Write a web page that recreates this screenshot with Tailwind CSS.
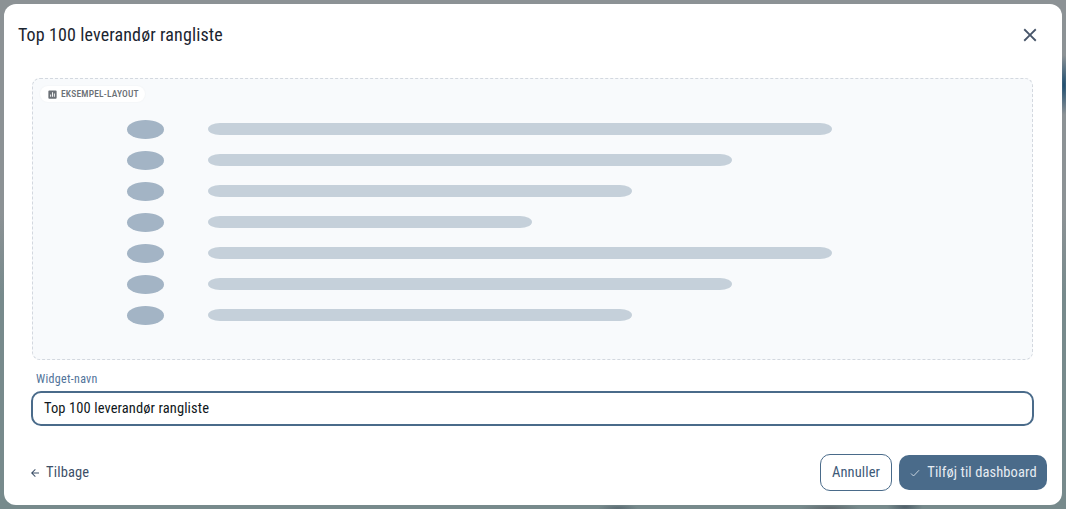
<!DOCTYPE html>
<html lang="da">
<head>
<meta charset="utf-8">
<title>Top 100 leverandør rangliste</title>
<script src="https://cdn.jsdelivr.net/npm/@tailwindcss/browser@4"></script>
</head>
<body class="w-[1066px] h-[509px] overflow-hidden bg-[#8a9194] font-['Roboto',sans-serif] [font-stretch:75%]">
<div class="w-full h-full px-1 pt-1 pb-1 bg-[radial-gradient(ellipse_6px_30px_at_1064px_85px,#1d4d70_0%,#1d4d7000_100%),radial-gradient(ellipse_18px_5px_at_905px_507px,#4f5e68_0%,#4f5e6800_100%),radial-gradient(ellipse_30px_4px_at_830px_508px,#5f686c_0%,#5f686c00_100%),radial-gradient(ellipse_20px_4px_at_618px_508px,#5b6b72_0%,#5b6b7200_100%),linear-gradient(180deg,#8c9295_0%,#8c9295_42%,#778a8c_58%,#778a8c_100%)]">
  <div class="w-[1058px] h-[501px] bg-white rounded-xl flex flex-col">
    <header class="h-[62px] flex items-center justify-between pl-[14px] pr-[20px]">
      <h1 class="text-[18px] leading-[28px] tracking-[0.12px] text-[#1b2530]">Top 100 leverandør rangliste</h1>
      <button class="w-6 h-6 flex items-center justify-center text-[#475569]">
        <svg class="w-[22px] h-[22px]" viewBox="0 0 24 24" fill="currentColor"><path d="M19 6.41 17.59 5 12 10.59 6.41 5 5 6.41 10.59 12 5 17.59 6.41 19 12 13.41 17.59 19 19 17.59 13.41 12z"/></svg>
      </button>
    </header>
    <section class="ml-7 mr-[29px] mt-3 h-[282px] relative rounded-lg border border-dashed border-[#d3d8df] bg-[#f8fafc] flex flex-col gap-[13px] pt-[41px] pl-[94px]">
      <div class="absolute left-[7px] top-[7px] h-4 w-[105px] pl-[7px] rounded-full bg-white shadow-[0_0_2px_rgba(0,0,0,0.05)] flex items-center gap-[3px] text-[9.5px] font-medium tracking-[0.18px] text-[#6b7076]">
        <svg class="w-[11px] h-[11px]" viewBox="0 0 24 24" fill="currentColor"><path d="M19 3H5a2 2 0 0 0-2 2v14a2 2 0 0 0 2 2h14a2 2 0 0 0 2-2V5a2 2 0 0 0-2-2zM9 17H7v-5h2zm4 0h-2V7h2zm4 0h-2v-7h2z"/></svg>
        <span class="pt-px">EKSEMPEL-LAYOUT</span>
      </div>
      <div class="flex items-center h-[18px] gap-11"><span class="w-[37px] h-[19px] rounded-[50%] bg-[#a3b4c5]"></span><span class="w-[624px] h-3 rounded-[12px/6px] bg-[#c5d0da]"></span></div>
      <div class="flex items-center h-[18px] gap-11"><span class="w-[37px] h-[19px] rounded-[50%] bg-[#a3b4c5]"></span><span class="w-[524px] h-3 rounded-[12px/6px] bg-[#c5d0da]"></span></div>
      <div class="flex items-center h-[18px] gap-11"><span class="w-[37px] h-[19px] rounded-[50%] bg-[#a3b4c5]"></span><span class="w-[424px] h-3 rounded-[12px/6px] bg-[#c5d0da]"></span></div>
      <div class="flex items-center h-[18px] gap-11"><span class="w-[37px] h-[19px] rounded-[50%] bg-[#a3b4c5]"></span><span class="w-[324px] h-3 rounded-[12px/6px] bg-[#c5d0da]"></span></div>
      <div class="flex items-center h-[18px] gap-11"><span class="w-[37px] h-[19px] rounded-[50%] bg-[#a3b4c5]"></span><span class="w-[624px] h-3 rounded-[12px/6px] bg-[#c5d0da]"></span></div>
      <div class="flex items-center h-[18px] gap-11"><span class="w-[37px] h-[19px] rounded-[50%] bg-[#a3b4c5]"></span><span class="w-[524px] h-3 rounded-[12px/6px] bg-[#c5d0da]"></span></div>
      <div class="flex items-center h-[18px] gap-11"><span class="w-[37px] h-[19px] rounded-[50%] bg-[#a3b4c5]"></span><span class="w-[424px] h-3 rounded-[12px/6px] bg-[#c5d0da]"></span></div>
    </section>
    <div class="ml-[27px] mr-7 mt-[11px]">
      <label class="block pl-[5px] text-[12px] leading-4 tracking-[0.3px] text-[#4f7299]">Widget-navn</label>
      <div class="mt-1 h-[35px] rounded-[10px] border-2 border-[#4a6b8a] flex items-center pl-[11px] text-[14.5px] tracking-[0.1px] text-[#0f1720]">Top 100 leverandør rangliste</div>
    </div>
    <footer class="mt-auto mb-[14px] flex items-center justify-between pl-[25px] pr-[15px]">
      <button class="flex items-center gap-[5px] text-[14.5px] tracking-[0.15px] text-[#3d5068]">
        <svg class="w-3 h-3" viewBox="0 0 24 24" fill="currentColor"><path d="M20 11H7.83l5.59-5.59L12 4l-8 8 8 8 1.41-1.41L7.83 13H20z"/></svg>
        Tilbage
      </button>
      <div class="flex items-center gap-[7px]">
        <button class="w-[72px] h-[37px] rounded-[10px] border border-[#4a6b8a] text-[14.5px] tracking-[0.1px] text-[#3d5a78]">Annuller</button>
        <button class="w-[148px] h-[35px] rounded-[10px] bg-[#4a6b8a] flex items-center justify-center gap-[6px] text-[14.5px] tracking-[0.1px] text-[#e6ecf2]">
          <svg class="w-3 h-3" viewBox="0 0 24 24" fill="none" stroke="currentColor" stroke-width="1.6"><path d="M4 13l5 5L20 6.5"/></svg>
          Tilføj til dashboard
        </button>
      </div>
    </footer>
  </div>
</div>
</body>
</html>
